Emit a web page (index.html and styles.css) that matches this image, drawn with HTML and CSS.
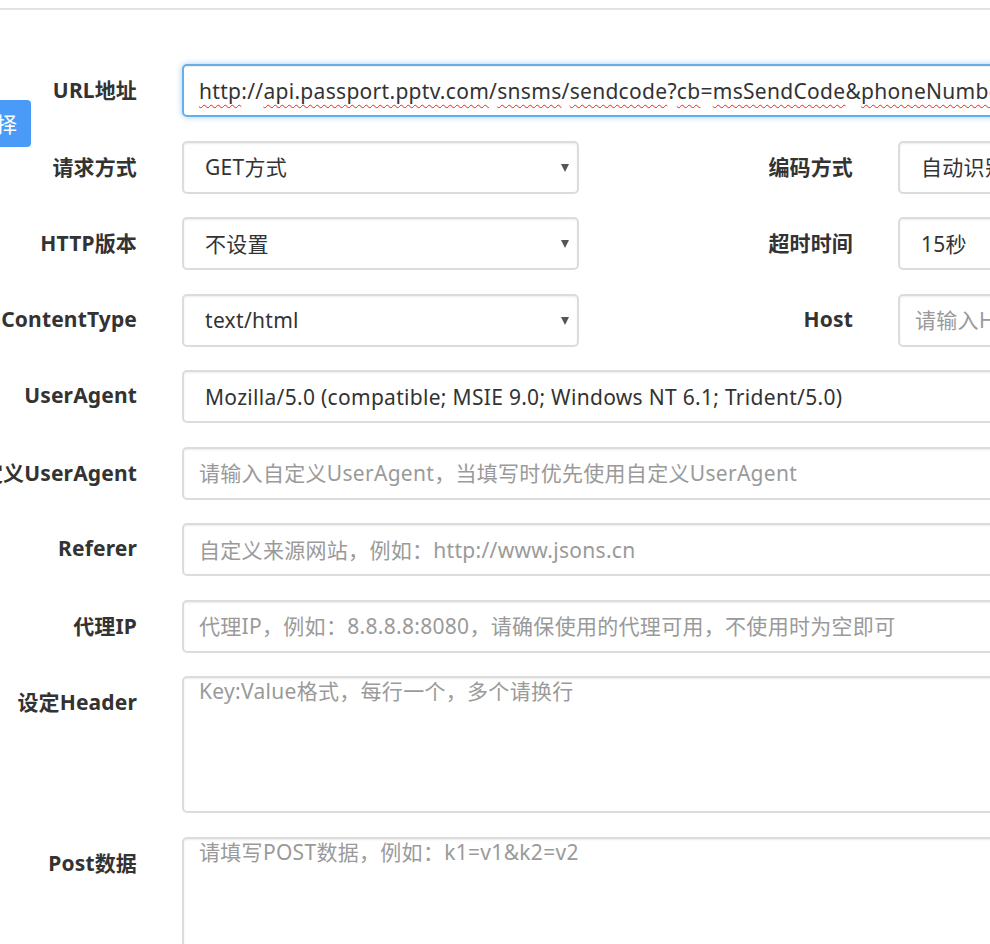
FILE: index.html
```html
<!DOCTYPE html>
<html lang="zh-CN">
<head>
<meta charset="utf-8">
<title>HTTP请求</title>
<link rel="stylesheet" href="styles.css">
</head>
<body>
<div class="topline"></div>
<span class="side-btn">选择</span>
<form class="form">
  <div class="row">
    <label class="lbl">URL地址</label>
    <div class="ctrl ctrl-full focused url"><span class="sp">http</span>://<span class="sp">api.passport.pptv.com</span>/<span class="sp">snsms</span>/<span class="sp">sendcode</span>?<span class="sp">cb</span>=<span class="sp">msSendCode</span>&amp;<span class="sp">phoneNumber</span>=</div>
  </div>
  <div class="row">
    <label class="lbl">请求方式</label>
    <div class="sel-wrap sel-half"><select class="ctrl sel"><option>GET方式</option><option>POST方式</option></select></div>
    <label class="lbl lbl-right">编码方式</label>
    <div class="sel-wrap sel-right"><select class="ctrl sel"><option>自动识别</option></select></div>
  </div>
  <div class="row">
    <label class="lbl">HTTP版本</label>
    <div class="sel-wrap sel-half"><select class="ctrl sel"><option>不设置</option></select></div>
    <label class="lbl lbl-right">超时时间</label>
    <div class="sel-wrap sel-right"><select class="ctrl sel"><option>15秒</option></select></div>
  </div>
  <div class="row">
    <label class="lbl">ContentType</label>
    <div class="sel-wrap sel-half"><select class="ctrl sel"><option>text/html</option></select></div>
    <label class="lbl lbl-right">Host</label>
    <input class="ctrl inp-right" type="text" placeholder="请输入Host">
  </div>
  <div class="row">
    <label class="lbl">UserAgent</label>
    <div class="sel-wrap sel-full"><select class="ctrl sel"><option>Mozilla/5.0 (compatible; MSIE 9.0; Windows NT 6.1; Trident/5.0)</option></select></div>
  </div>
  <div class="row">
    <label class="lbl">自定义UserAgent</label>
    <input class="ctrl ctrl-full" type="text" placeholder="请输入自定义UserAgent，当填写时优先使用自定义UserAgent">
  </div>
  <div class="row">
    <label class="lbl">Referer</label>
    <input class="ctrl ctrl-full" type="text" placeholder="自定义来源网站，例如：http://www.jsons.cn">
  </div>
  <div class="row">
    <label class="lbl">代理IP</label>
    <input class="ctrl ctrl-full" type="text" placeholder="代理IP，例如：8.8.8.8:8080，请确保使用的代理可用，不使用时为空即可">
  </div>
  <div class="row">
    <label class="lbl">设定Header</label>
    <textarea class="ctrl ctrl-full area" placeholder="Key:Value格式，每行一个，多个请换行"></textarea>
  </div>
  <div class="row">
    <label class="lbl">Post数据</label>
    <textarea class="ctrl ctrl-full area area-post" placeholder="请填写POST数据，例如：k1=v1&amp;k2=v2"></textarea>
  </div>
</form>
</body>
</html>
```
FILE: styles.css
```css
html, body {
  margin: 0;
  padding: 0;
  overflow: hidden;
  background: #fff;
}
body {
  position: relative;
  width: 990px;
  height: 944px;
  font-family: "Noto Sans", "Noto Sans CJK SC", sans-serif;
  color: #333;
}
.topline {
  margin-top: 8px;
  height: 2px;
  background: #e2e2e2;
}
.side-btn {
  position: absolute;
  left: -60px;
  top: 100px;
  width: 77px;
  height: 47px;
  padding-right: 14px;
  background: #4a9bf8;
  color: #fff;
  border-radius: 0 4px 4px 0;
  font-family: "Noto Sans CJK SC", sans-serif;
  font-size: 21px;
  line-height: 47px;
  text-align: right;
}
.form {
  display: flex;
  flex-direction: column;
  gap: 23.5px;
  margin-top: 54px;
  width: 1400px;
}
.row {
  display: flex;
  align-items: flex-start;
}
.lbl {
  display: flex;
  justify-content: flex-end;
  align-items: center;
  flex: none;
  width: 137px;
  height: 50px;
  margin-right: 45px;
  white-space: nowrap;
  font-weight: 700;
  font-size: 21px;
  letter-spacing: 0.15px;
  color: #333;
}
.lbl-right {
  width: 274px;
}
.ctrl {
  box-sizing: border-box;
  height: 53px;
  margin: 0;
  padding: 0 15px;
  border: 2px solid #dcdcdc;
  border-radius: 5px;
  box-shadow: inset 0 1px 2px rgba(0,0,0,.08);
  background: #fff;
  font-family: "Noto Sans", "Noto Sans CJK SC", sans-serif;
  font-size: 21px;
  letter-spacing: 0.3px;
  color: #555;
  outline: none;
}
.ctrl::placeholder {
  color: #9a9a9a;
}
.ctrl-full {
  width: 1100px;
}
.url {
  display: flex;
  align-items: center;
  white-space: nowrap;
  color: #333;
}
.focused {
  border-color: #66afe9;
  box-shadow: inset 0 1px 1px rgba(0,0,0,.075), 0 0 6px rgba(102,175,233,.6);
}
.sp {
  text-decoration: underline wavy #e8261f;
  text-decoration-thickness: 1px;
  text-underline-offset: 5px;
  text-decoration-skip-ink: none;
}
.sel-wrap {
  position: relative;
  flex: none;
}
.sel-half { width: 397px; }
.sel-right { width: 400px; }
.sel-full { width: 1100px; }
.sel {
  width: 100%;
  appearance: none;
  -webkit-appearance: none;
  padding-left: 21px;
  color: #333;
}
.sel-half::after {
  content: "";
  position: absolute;
  left: 379px;
  top: 23px;
  border-left: 4px solid transparent;
  border-right: 4px solid transparent;
  border-top: 8px solid #555;
}
.inp-right {
  width: 400px;
  flex: none;
}
.area {
  height: 137px;
  padding-top: 0;
  resize: none;
  line-height: 26px;
}
.area-post {
  height: 200px;
}
```
